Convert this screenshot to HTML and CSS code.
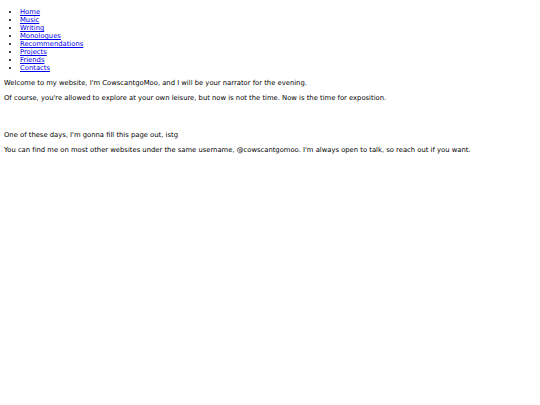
FILE: index.html
```html
<!DOCTYPE html>
<html>
<head>
<meta charset="utf-8">
<title>CowscantgoMoo</title>
<link rel="stylesheet" href="styles.css">
</head>
<body class="page">
<ul class="nav">
<li><a href="#">Home</a></li>
<li><a href="#">Music</a></li>
<li><a href="#">Writing</a></li>
<li><a href="#">Monologues</a></li>
<li><a href="#">Recommendations</a></li>
<li><a href="#">Projects</a></li>
<li><a href="#">Friends</a></li>
<li><a href="#">Contacts</a></li>
</ul>
<p class="text">Welcome to my website, I'm CowscantgoMoo, and I will be your narrator for the evening.</p>
<p class="text">Of course, you're allowed to explore at your own leisure, but now is not the time. Now is the time for exposition.</p>
<div class="gap"></div>
<p class="text">One of these days, I'm gonna fill this page out, istg</p>
<p class="text">You can find me on most other websites under the same username, @cowscantgomoo. I'm always open to talk, so reach out if you want.</p>
</body>
</html>
```
FILE: styles.css
```css
html { background: #fff; }
.page {
  margin: 4px;
  font-family: "DejaVu Sans", Verdana, sans-serif;
  font-size: 6.8px;
  line-height: 8px;
  color: #000;
  font-variant-ligatures: none;
}
.nav {
  margin: 4px 0 7px;
  padding-left: 16px;
}
.nav a { color: #0000ee; }
.text { margin: 7px 0; }
.gap { height: 15px; margin: 7px 0; }
```
